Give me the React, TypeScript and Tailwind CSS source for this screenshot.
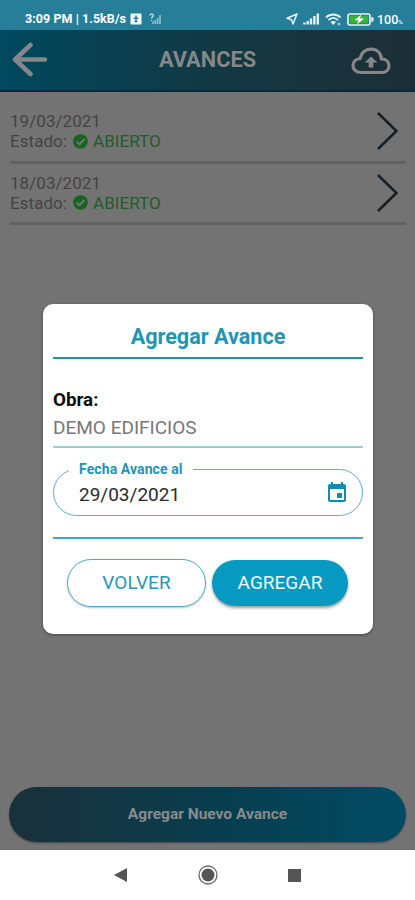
import { useState } from 'react';

interface Avance {
  id: number;
  fecha: string;
  estado: string;
}

const avances: Avance[] = [
  { id: 1, fecha: '19/03/2021', estado: 'ABIERTO' },
  { id: 2, fecha: '18/03/2021', estado: 'ABIERTO' },
];

function StatusBar() {
  return (
    <div className="flex h-[30px] shrink-0 items-center bg-[#267e98] pt-2 pr-[11px] pl-[25px] text-white">
      <span className="w-[102px] shrink-0 whitespace-nowrap text-[12.5px] leading-[22px] font-bold tracking-[0.05px]">
        3:09 PM | 1.5kB/s
      </span>
      <svg width="12" height="12" viewBox="0 0 12 12" className="ml-[3px]">
        <rect x="0.5" y="0.5" width="11" height="11" rx="1" fill="#f4fafb" />
        <path d="M6 2.500v6M3.500 5.200h5M4.500 8.500h3" stroke="#267e98" strokeWidth="1.5" fill="none" />
      </svg>
      <svg width="13" height="12" viewBox="0 0 13 12" className="ml-[7px]">
        <path d="M1 2.5C1 .4 4.4.5 4.3 2.4C4.2 3.8 2.6 3.8 2.6 5.4M2.6 7v1" stroke="#b9dce5" strokeWidth="1.4" fill="none" />
        <path d="M4 11V8.5M6.3 11V7M8.6 11V5M11 11V2" stroke="#83b8c8" strokeWidth="1.8" />
      </svg>
      <div className="ml-auto flex items-center">
        <svg width="12" height="12" viewBox="0 0 12 12" className="mr-[5px]">
          <path d="M11 1L7 11L5.5 6.8L1 5.3Z" stroke="#e7f4f7" strokeWidth="1.5" fill="none" strokeLinejoin="round" />
        </svg>
        <svg width="17" height="12" viewBox="0 0 17 12" className="mr-[5px]">
          <path d="M1.5 11.5V9.5M4.7 11.5V8M8 11.5V5.5M11.4 11.5V3M14.8 11.5V.5" stroke="#e2f1f5" strokeWidth="2.4" />
        </svg>
        <svg width="17" height="13" viewBox="0 0 17 13" className="mr-[5px]">
          <path d="M1 4.5C5 .5 11.500 .5 15.500 4.500M3.500 7.200C6.400 4.400 10.100 4.400 13 7.200" stroke="#e7f4f7" strokeWidth="1.8" fill="none" />
          <path d="M5.500 9C7.200 7.500 9.300 7.500 11 9L8.250 12Z" fill="#e7f4f7" />
          <path d="M14 9.500v3M12.500 11h3" stroke="#b9dce5" strokeWidth="1" />
        </svg>
        <svg width="27" height="13" viewBox="0 0 27 13" className="mr-[3px]">
          <rect x="1" y="1" width="22" height="11" rx="2" stroke="#e8f6ec" strokeWidth="1.6" fill="#267e98" />
          <rect x="2.800" y="2.800" width="18.400" height="7.400" fill="#38b43b" />
          <path d="M24.300 3.500L26.500 5v3l-2.200 1.500Z" fill="#e8f6ec" />
          <path d="M14 1.500L7.500 7.300h4L10 11.500L17 5.600h-4Z" fill="#fff" />
        </svg>
        <span className="-mr-[3px] flex w-[30px] items-baseline pt-[2px] text-[12.5px] leading-[22px] font-medium">
          100<span className="text-[6px] leading-none">%</span>
        </span>
      </div>
    </div>
  );
}

function Header() {
  return (
    <header className="flex h-[62px] shrink-0 items-center border-b-2 border-[#0a2932] bg-linear-to-r from-[#00495f] via-[#103944] to-[#1c2e36] pr-6 pl-3 text-[#858789]">
      <svg width="38" height="36" viewBox="0 0 38 36" fill="none" stroke="currentColor" strokeWidth="4.500" strokeLinecap="round" strokeLinejoin="round">
        <path d="M18.500 3L3 17.500L18.500 32M3 17.500H33" />
      </svg>
      <h1 className="flex-1 pl-[14px] text-center text-[21.800px] font-bold">AVANCES</h1>
      <svg width="40" height="28" viewBox="0 0 40 28" className="mt-px">
        <path
          d="M10 25.500C5.300 25.500 2 22.400 2 18.500C2 14.500 5 12 9 11.500C10.500 5.500 14.500 2.200 20 2.200C26 2.200 30 6 30.500 12C35 12 38 14.700 38 18.800C38 22.700 35 25.500 31 25.500Z"
          fill="none"
          stroke="currentColor"
          strokeWidth="3.200"
        />
        <path d="M20 9.500L26.500 15.500H22.300V20.500H17.700V15.500H13.500Z" fill="currentColor" />
      </svg>
    </header>
  );
}

function AvanceRow({ avance }: { avance: Avance }) {
  return (
    <li className="flex h-[61.5px] items-center justify-between border-b-[3px] border-[#626262] pr-2">
      <div className="text-[17px] leading-[20px] tracking-[0.05px] text-[#444]">
        <p>{avance.fecha}</p>
        <p className="flex items-center">
          Estado:
          <svg width="15" height="15" viewBox="0 0 15 15" className="mr-[5px] ml-[6px]">
            <circle cx="7.500" cy="7.500" r="7.300" fill="#176321" />
            <path d="M3.700 7.700L6.500 10.300L11.500 5" stroke="#737373" strokeWidth="2" fill="none" />
          </svg>
          <span className="text-[#215c2b]">{avance.estado}</span>
        </p>
      </div>
      <svg width="21" height="38" viewBox="0 0 21 38" fill="none" stroke="#171f27" strokeWidth="2.600">
        <path d="M1 1L19.500 19L1 37" />
      </svg>
    </li>
  );
}

function AgregarModal({ fecha, onClose }: { fecha: string; onClose: () => void }) {
  return (
    <div className="absolute inset-x-0 top-[304px] flex justify-center pl-px">
      <div className="flex h-[330px] w-[330px] flex-col rounded-[10px] bg-white px-[10px] shadow-[0_1px_3px_rgba(0,0,0,0.4)]">
        <h2 className="h-[55px] border-b-[2.500px] border-[#1698b8] pt-[18px] text-center text-[21.600px] leading-[30px] font-bold text-[#1d95b7]">
          Agregar Avance
        </h2>

        <div className="h-[89px] border-b-2 border-[#9bcdd6] pt-[27px]">
          <p className="text-[18.800px] leading-[28px] font-bold text-[#0c0c0c]">Obra:</p>
          <p className="text-[19px] leading-[28px] text-[#777]">DEMO EDIFICIOS</p>
        </div>

        {/* Fecha */}
        <fieldset className="mt-[14px] h-[54px] rounded-[24px] border-[1.500px] border-[#5bb0c7] pr-[13px] pl-[15px]">
          <legend className="px-[10px] text-[14px] leading-[15px] font-bold tracking-[0.1px] text-[#1d95b7]">
            Fecha Avance al
          </legend>
          <div className="flex h-[34px] items-center justify-between pl-[10px]">
            <span className="pt-[3px] text-[19px] text-[#2b2b2b]">{fecha}</span>
            <svg width="24" height="24" viewBox="0 0 24 24" fill="#138cab" className="mb-[3px]">
              <path d="M17 12h-5v5h5v-5zM16 1v2H8V1H6v2H5c-1.100 0-2 .9-2 2v14c0 1.100.9 2 2 2h14c1.100 0 2-.9 2-2V5c0-1.100-.9-2-2-2h-1V1h-2zm3 18H5V8h14v11z" />
            </svg>
          </div>
        </fieldset>

        {/* Actions */}
        <div className="mt-[21px] flex justify-center gap-[6px] border-t-2 border-[#42a5c3] pt-[20px] pr-px">
          <button
            onClick={onClose}
            className="h-[48px] w-[139px] rounded-full border-[1.500px] border-[#4aa9c4] text-[19px] text-[#2997b8] shadow-[0_1px_2px_rgba(0,0,0,0.25)]"
          >
            VOLVER
          </button>
          <button
            onClick={onClose}
            className="mt-px h-[46px] w-[136px] rounded-full bg-[#069ac3] text-[19px] text-[#effaff] shadow-[0_2px_3px_rgba(0,0,0,0.4)]"
          >
            AGREGAR
          </button>
        </div>
      </div>
    </div>
  );
}

export default function App() {
  const [showModal, setShowModal] = useState(true);

  return (
    <div className="relative flex h-[900px] w-[415px] flex-col overflow-hidden bg-[#737373] font-[Roboto,sans-serif]">
      <StatusBar />
      <Header />

      <ul className="flex-1 pt-[10px] pr-[9px] pl-[10px]">
        {avances.map((avance) => (
          <AvanceRow key={avance.id} avance={avance} />
        ))}
      </ul>

      <div className="px-[9px] pb-[8px]">
        <button
          onClick={() => setShowModal(true)}
          className="h-[55px] w-full rounded-full bg-linear-to-r from-[#18303a] via-[#083d4d] to-[#004c65] pt-px text-[15.500px] font-bold text-[#858b8f] shadow-[0_1px_2px_rgba(0,0,0,0.4)]"
        >
          Agregar Nuevo Avance
        </button>
      </div>

      {/* Android navigation */}
      <nav className="flex h-[50px] shrink-0 items-center justify-between bg-white pr-[114px] pl-[114px]">
        <svg width="13" height="14" viewBox="0 0 13 14">
          <path d="M0 7L13 0V14Z" fill="#555" />
        </svg>
        <svg width="20" height="20" viewBox="0 0 20 20">
          <circle cx="10" cy="10" r="9" fill="none" stroke="#666" strokeWidth="1.300" />
          <circle cx="10" cy="10" r="6.500" fill="#555" />
        </svg>
        <svg width="13" height="13" viewBox="0 0 13 13">
          <rect width="13" height="13" fill="#555" />
        </svg>
      </nav>

      {showModal && <AgregarModal fecha="29/03/2021" onClose={() => setShowModal(false)} />}
    </div>
  );
}
